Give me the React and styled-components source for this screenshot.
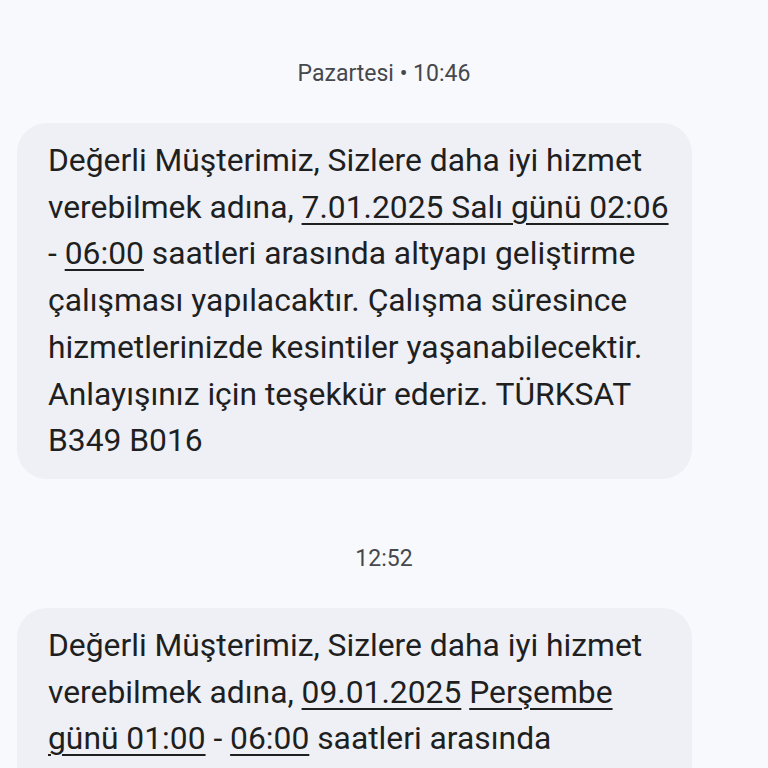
import React from "react";
import styled, { createGlobalStyle } from "styled-components";

const Global = createGlobalStyle`
  html, body {
    margin: 0;
    padding: 0;
    background: #f8f9fd;
  }
  body {
    font-family: Roboto, "Open Sans", sans-serif;
    -webkit-font-smoothing: antialiased;
  }
`;

const Thread = styled.div`
  width: 768px;
  height: 768px;
  overflow: hidden;
  display: flex;
  flex-direction: column;
  padding-top: 62px;
  box-sizing: border-box;
`;

const Stamp = styled.div`
  text-align: center;
  font-size: 23px;
  line-height: 24px;
  color: #46484c;
  margin-bottom: 37px;
  margin-top: ${(p) => (p.first ? "0" : "68px")};
`;

const Bubble = styled.div`
  margin-left: 17px;
  width: 675px;
  box-sizing: border-box;
  background: #eef0f5;
  border-radius: 30px;
  padding: 14px 20px 15px 31px;
  font-size: 31.8px;
  line-height: 46.7px;
  color: #1f1f1f;
  flex-shrink: 0;
  white-space: nowrap;
`;

const Link = styled.span`
  text-decoration: underline;
  text-decoration-thickness: 2px;
  text-underline-offset: 5px;
`;

export default function App() {
  return (
    <>
      <Global />
      <Thread>
        <Stamp first>Pazartesi • 10:46</Stamp>
        <Bubble>
          Değerli Müşterimiz, Sizlere daha iyi hizmet
          <br />
          verebilmek adına, <Link>7.01.2025 Salı günü 02:06</Link>
          <br />- <Link>06:00</Link> saatleri arasında altyapı geliştirme
          <br />
          çalışması yapılacaktır. Çalışma süresince
          <br />
          hizmetlerinizde kesintiler yaşanabilecektir.
          <br />
          Anlayışınız için teşekkür ederiz. TÜRKSAT
          <br />
          B349 B016
        </Bubble>
        <Stamp>12:52</Stamp>
        <Bubble>
          Değerli Müşterimiz, Sizlere daha iyi hizmet
          <br />
          verebilmek adına, <Link>09.01.2025</Link> <Link>Perşembe</Link>
          <br />
          <Link>günü 01:00</Link> - <Link>06:00</Link> saatleri arasında
          <br />
          altyapı geliştirme çalışması yapılacaktır.
        </Bubble>
      </Thread>
    </>
  );
}
